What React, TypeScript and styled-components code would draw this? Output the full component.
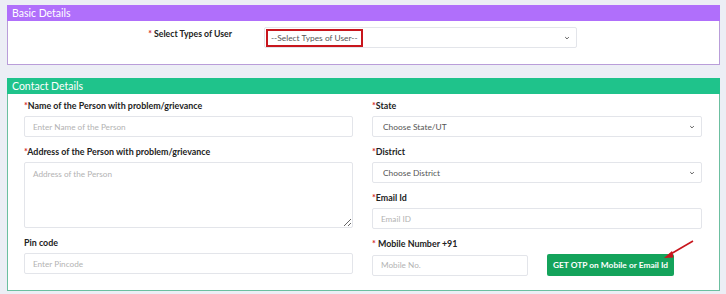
import React from "react";
import styled, { createGlobalStyle } from "styled-components";

const Global = createGlobalStyle`
  html, body { margin: 0; padding: 0; background: #eceef5; }
  body { font-family: Lato, "Open Sans", sans-serif; color: #222; }
  * { box-sizing: border-box; }
`;

const Page = styled.div`
  width: 726px;
  height: 294px;
  padding: 5px 6px 0 7px;
  display: flex;
  flex-direction: column;
  gap: 13px;
  overflow: hidden;
`;

const Card = styled.section<{ $border: string }>`
  background: #fff;
  border: 1px solid ${(p) => p.$border};
  border-top: none;
  width: 713px;
`;

const CardHeader = styled.div<{ $bg: string }>`
  background: ${(p) => p.$bg};
  color: #fff;
  height: 16px;
  font-size: 10.5px;
  line-height: 16px;
  padding-left: 5px;
  margin: 0 -1px;
`;

const BasicBody = styled.div`
  display: grid;
  grid-template-columns: 224px 313px;
  column-gap: 32px;
  padding: 6px 0 16px 0;
`;

const BasicLabel = styled.label`
  text-align: right;
  font-weight: 700;
  font-size: 8.7px;
  line-height: 13px;
`;

const Star = styled.span`
  color: #d42a2a;
`;

const SelectBox = styled.div<{ $h?: number }>`
  position: relative;
  height: ${(p) => p.$h ?? 21}px;
  border: 1px solid #e3e5ea;
  border-radius: 2px;
  background: #fff;
  display: flex;
  align-items: center;
  padding-left: 10px;
  font-size: 8.4px;
  color: #555;
`;

const Highlight = styled.span`
  border: 2px solid #c8161d;
  padding: 2px 3px;
  margin-left: -9px;
  color: #555;
  line-height: 10px;
`;

const Chevron = styled.svg`
  position: absolute;
  right: 6px;
  top: 50%;
  margin-top: -3px;
  width: 6px;
  height: 6px;
`;

const ContactBody = styled.div`
  display: grid;
  grid-template-columns: 329px 330px;
  column-gap: 19px;
  padding: 6px 0 14px 16px;
`;

const Column = styled.div`
  display: flex;
  flex-direction: column;
  gap: 9px;
`;

const Group = styled.div`
  display: flex;
  flex-direction: column;
  gap: 4px;
`;

const Label = styled.label`
  font-weight: 700;
  font-size: 8.9px;
  line-height: 12px;
  color: #222;
`;

const Input = styled.input<{ $w?: number }>`
  height: 21px;
  width: ${(p) => (p.$w ? `${p.$w}px` : "100%")};
  border: 1px solid #e3e5ea;
  border-radius: 2px;
  padding: 0 8px;
  font-family: inherit;
  font-size: 8.2px;
  outline: none;
  &::placeholder { color: #b3b3b3; }
`;

const TextArea = styled.textarea`
  height: 66px;
  width: 100%;
  border: 1px solid #e3e5ea;
  border-radius: 2px;
  padding: 6px 8px;
  font-family: inherit;
  font-size: 8.2px;
  resize: vertical;
  outline: none;
  display: block;
  &::placeholder { color: #b3b3b3; }
`;

const MobileRow = styled.div`
  position: relative;
  display: flex;
  align-items: center;
  gap: 19px;
`;

const OtpButton = styled.button`
  height: 22px;
  width: 127px;
  background: #14a35b;
  color: #fff;
  border: none;
  border-radius: 2px;
  font-family: inherit;
  font-weight: 700;
  font-size: 8.4px;
  padding: 0;
`;

const Arrow = styled.svg`
  position: absolute;
  left: 288px;
  top: -14px;
  width: 36px;
  height: 24px;
  overflow: visible;
`;

const Caret = () => (
  <Chevron viewBox="0 0 10 10">
    <path d="M2 3.5 L5 6.5 L8 3.5" fill="none" stroke="#555" strokeWidth="1.6" />
  </Chevron>
);

export default function App() {
  return (
    <>
      <Global />
      <Page>
        <Card $border="#b99dd9">
          <CardHeader $bg="#b06ffb">Basic Details</CardHeader>
          <BasicBody>
            <BasicLabel>
              <Star>*</Star> Select Types of User
            </BasicLabel>
            <SelectBox>
              <Highlight>--Select Types of User--</Highlight>
              <Caret />
            </SelectBox>
          </BasicBody>
        </Card>
        <Card $border="#6cbfa0">
          <CardHeader $bg="#1fc38b">Contact Details</CardHeader>
          <ContactBody>
            <Column>
              <Group>
                <Label>
                  <Star>*</Star>Name of the Person with problem/grievance
                </Label>
                <Input placeholder="Enter Name of the Person" />
              </Group>
              <Group>
                <Label>
                  <Star>*</Star>Address of the Person with problem/grievance
                </Label>
                <TextArea placeholder="Address of the Person" />
              </Group>
              <Group>
                <Label>Pin code</Label>
                <Input placeholder="Enter Pincode" />
              </Group>
            </Column>
            <Column>
              <Group>
                <Label>
                  <Star>*</Star>State
                </Label>
                <SelectBox>
                  Choose State/UT
                  <Caret />
                </SelectBox>
              </Group>
              <Group>
                <Label>
                  <Star>*</Star>District
                </Label>
                <SelectBox>
                  Choose District
                  <Caret />
                </SelectBox>
              </Group>
              <Group>
                <Label>
                  <Star>*</Star>Email Id
                </Label>
                <Input placeholder="Email ID" />
              </Group>
              <Group>
                <Label>
                  <Star>*</Star> Mobile Number +91
                </Label>
                <MobileRow>
                  <Input $w={156} placeholder="Mobile No." />
                  <OtpButton>GET OTP on Mobile or Email Id</OtpButton>
                  <Arrow viewBox="0 0 36 24">
                    <path d="M33 1 L9 15" stroke="#c8161d" strokeWidth="1.6" fill="none" />
                    <path d="M4 18 L12 11 L13.5 17.5 Z" fill="#c8161d" />
                  </Arrow>
                </MobileRow>
              </Group>
            </Column>
          </ContactBody>
        </Card>
      </Page>
    </>
  );
}
